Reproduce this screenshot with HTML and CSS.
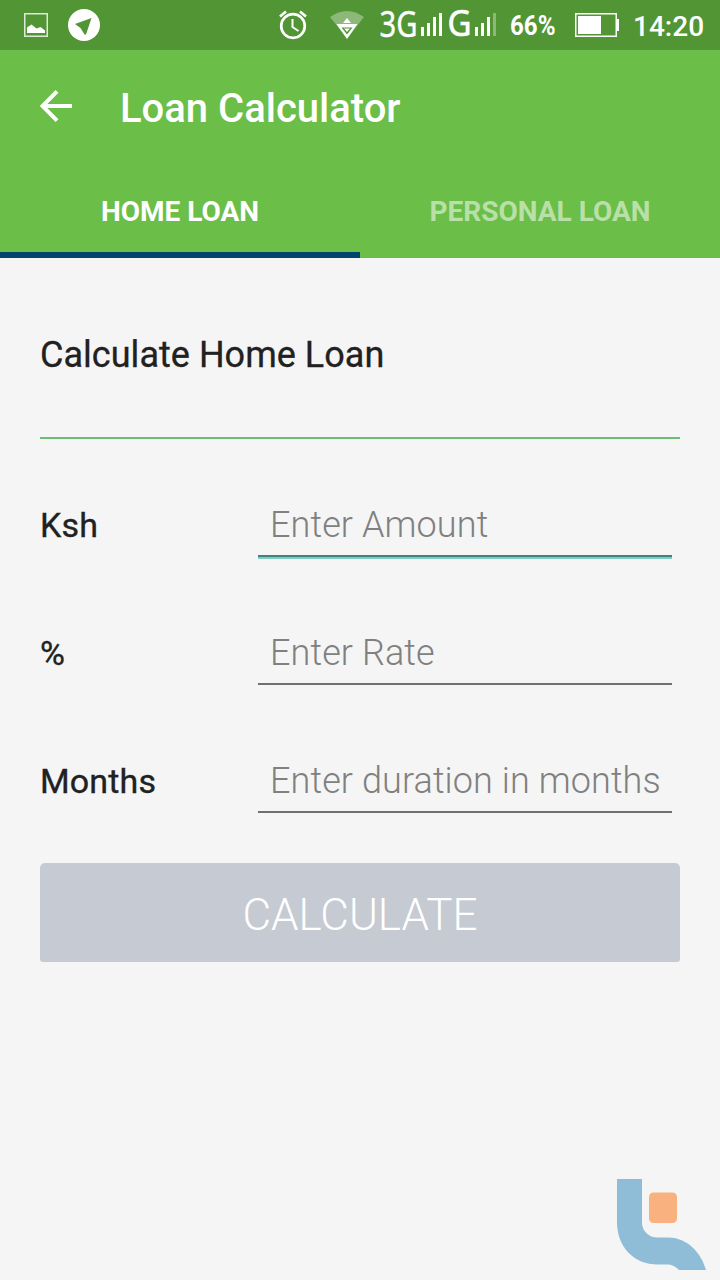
FILE: index.html
```html
<!DOCTYPE html>
<html lang="en">
<head>
<meta charset="utf-8">
<title>Loan Calculator</title>
<link rel="stylesheet" href="styles.css">
</head>
<body>
<div class="screen">
  <div class="status">
    <svg class="status-left" width="120" height="50" viewBox="0 0 120 50">
      <rect x="24.75" y="13.75" width="22.5" height="22.5" fill="none" stroke="#dcebd5" stroke-width="1.5"/>
      <path d="M27 33v-5.500l4.500-3 5 4 4-1.500 4.500 3.500v2.500z" fill="#fff"/>
      <circle cx="84" cy="25" r="16" fill="#fff"/>
      <path d="M91.500 18 75 24l5.500 4 4 6.500h1.500z" fill="#519535"/>
    </svg>
    <svg class="status-right" width="370" height="50" viewBox="270 0 370 50">
      <g fill="none" stroke="#fff" stroke-width="2.700">
        <circle cx="293" cy="26" r="11.800"/>
        <path d="M280 16.500l6-5M300 11.500l6 5"/>
        <path d="M292.500 19v8l6 4" stroke-width="2"/>
      </g>
      <path d="M330 17Q347 5 364 17L347 38.500z" fill="#8cb977"/>
      <path d="M347 18l4 5h-8zM336.500 24h21L347 39z" fill="#fff"/>
      <path d="M341.500 27.500h11L347 34.500z" fill="#519535"/>
      <path d="M344 28.500h6L347 32z" fill="#fff"/>
      <text class="network" x="379.500" y="36.500" textLength="38" lengthAdjust="spacingAndGlyphs">3G</text>
      <path d="M421 27h3v9h-3zM427 23h3v13h-3zM433 17h3v19h-3zM439 13h3v23h-3z" fill="#fff"/>
      <text class="network network-bold" x="447.500" y="35.500" textLength="24" lengthAdjust="spacingAndGlyphs">G</text>
      <path d="M475 27h3v9h-3zM481 23h3v13h-3zM487 17h3v19h-3z" fill="#fff"/>
      <path d="M493 13h3v23h-3z" fill="#8cb977"/>
      <text class="battery" x="510" y="35" textLength="45.500" lengthAdjust="spacingAndGlyphs">66%</text>
      <rect x="575.750" y="13.750" width="40.500" height="22.500" fill="none" stroke="#fff" stroke-width="1.500"/>
      <path d="M578 16h23v18h-23zM616 19h3v12h-3z" fill="#fff"/>
    </svg>
    <span class="clock">14:20</span>
  </div>
  <header class="header">
    <div class="toolbar">
      <svg class="back" width="32" height="32" viewBox="0 0 32 32"><path d="M32 16H3M17 1.400 2.500 16 17 30.600" fill="none" stroke="#fff" stroke-width="4"/></svg>
      <h1 class="title">Loan Calculator</h1>
    </div>
    <nav class="tabs">
      <span class="tab active">HOME LOAN</span>
      <span class="tab">PERSONAL LOAN</span>
    </nav>
  </header>
  <main class="content">
    <h2 class="heading">Calculate Home Loan</h2>
    <div class="row"><span class="label">Ksh</span><div class="field focused"><span class="hint">Enter Amount</span></div></div>
    <div class="row"><span class="label">%</span><div class="field"><span class="hint">Enter Rate</span></div></div>
    <div class="row"><span class="label">Months</span><div class="field"><span class="hint">Enter duration in months</span></div></div>
    <button class="calculate">CALCULATE</button>
  </main>
  <svg class="logo" width="90" height="92" viewBox="0 0 90 92">
    <path d="M0 0H25V44A15 15 0 0 0 40 58.500H52C70 59 84 73 89 91H62Q57 86 52 85.500H41C17 85.500 0 68 0 43z" fill="#8fbcd6"/>
    <rect x="32" y="13.500" width="28" height="30.500" rx="4.500" fill="#fab180"/>
  </svg>
</div>
</body>
</html>
```
FILE: styles.css
```css
* { box-sizing: border-box; }
body { margin: 0; background: #f5f5f5; font-family: Roboto, "Liberation Sans", sans-serif; color: #212121; }
.screen { width: 720px; height: 1280px; display: flex; flex-direction: column; overflow: hidden; background: #f5f5f5; }
.status { height: 50px; flex: none; display: flex; background: #519535; color: #fff; }
.status-left { margin-right: 150px; flex: none; }
.status-right { flex: none; margin-right: -7px; overflow: visible; }
.network { font: 400 36px "Noto Sans", sans-serif; fill: #fff; stroke: #fff; stroke-width: .4px; }
.network-bold { stroke-width: .7px; }
.battery { font: 700 28px Roboto, sans-serif; fill: #fff; }
.clock { font-size: 28px; font-weight: 500; line-height: 53px; }
.header { height: 208px; flex: none; background: #6bbe48; color: #fff; display: flex; flex-direction: column; }
.toolbar { height: 112px; display: flex; align-items: center; padding-left: 40px; gap: 48px; }
.title { margin: 0; font-size: 40px; font-weight: 500; line-height: 48px; padding-top: 6px; }
.tabs { height: 96px; display: flex; }
.tab { flex: 1; text-align: center; font-size: 28px; font-weight: 700; line-height: 100px; color: #b9e0a8; }
.tab.active { color: #fff; border-bottom: 6px solid #00456b; }
.content { padding: 0 40px; display: flex; flex-direction: column; }
.heading { margin: 0 0 28px; height: 181px; padding-top: 73px; border-bottom: 2px solid #6bbf72; font-size: 36px; line-height: 48px; font-weight: 400; -webkit-text-stroke: .3px #212121; letter-spacing: .03px; }
.row { height: 128px; display: flex; }
.label { width: 218px; padding-top: 34px; font-size: 34px; font-weight: 400; -webkit-text-stroke: .35px #212121; letter-spacing: .15px; line-height: 48px; }
.field { width: 414px; height: 90px; padding: 34px 12px 0; border-bottom: 2px solid #6f6f6f; white-space: nowrap; }
.field.focused { border-color: #40827c; box-shadow: 0 2px #80cbc4; }
.hint { font-size: 36px; line-height: 48px; font-weight: 300; color: #808080; letter-spacing: .1px; }
.calculate { margin: 12px 0 0; height: 99px; border: 0; border-radius: 5px 5px 3px 3px; background: #c6cad2; color: #fff; font: 300 44px/48px Roboto, sans-serif; padding: 5px 0 0; }
.logo { margin: auto 13px 9px auto; flex: none; }
```
